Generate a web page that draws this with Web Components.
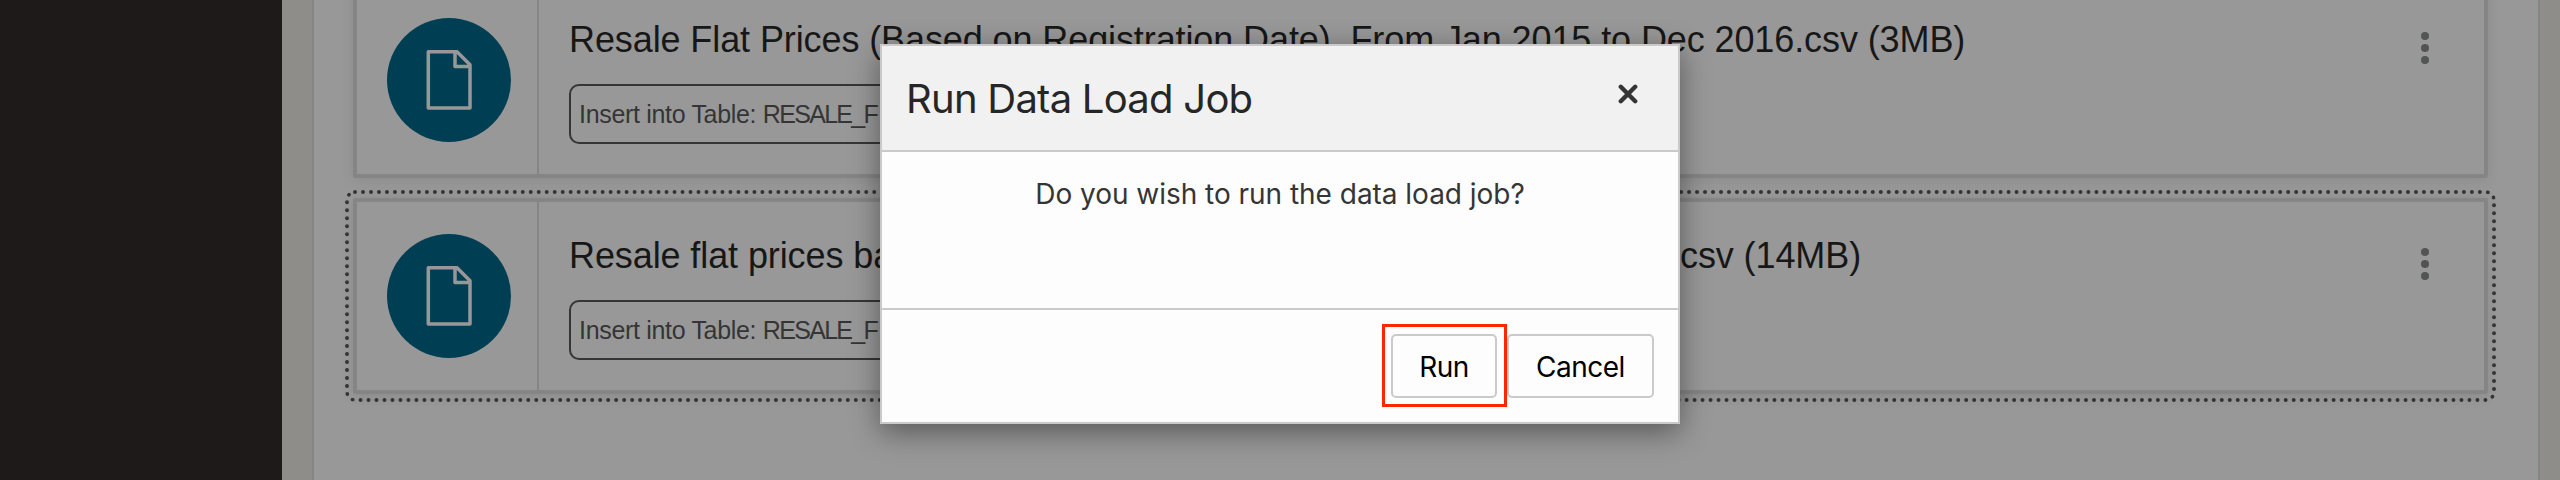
<!DOCTYPE html>
<html lang="en"><head><meta charset="utf-8"><title>Data Load</title>
<style>
html,body{margin:0;height:480px;overflow:hidden}
body{font-family:"Liberation Sans",Arial,sans-serif}
.wide{letter-spacing:.3px}
.tight{letter-spacing:-1.7px}
</style></head><body>
<load-app>
<load-card><span slot="title">Resale Flat Prices (Based on Registration Date), From Jan 2015 to Dec 2016.csv (3MB)</span><span slot="target">Insert into Table: <span class="tight">RESALE_F</span></span></load-card>
<load-card selected><span slot="title">Resale flat prices based<span class="wide"> on registration date from Jan-2017 onwards</span>.csv (14MB)</span><span slot="target">Insert into Table: <span class="tight">RESALE_F</span></span></load-card>
<confirm-dialog slot="dialog"><span slot="title">Run Data Load Job</span><span slot="message">Do you wish to run the data load job?</span>
<dialog-button slot="actions" marked style="width:106px">Run</dialog-button><dialog-button slot="actions" style="width:147px">Cancel</dialog-button></confirm-dialog>
</load-app>
<script>
const define=(name,html)=>customElements.define(name,class extends HTMLElement{
 constructor(){super();this.attachShadow({mode:"open"}).innerHTML=html}
});
define("file-icon",`<style>:host{display:flex;width:124px;height:124px;border-radius:50%;background:#003f53;align-items:center;justify-content:center}svg{display:block}</style>
<svg width="46" height="62" viewBox="0 -1 46 62" fill="none" stroke="#989898" stroke-width="3.5" stroke-linejoin="round"><path d="M2.3 1.7H31L44 14.8V58H2.3Z M29 1.7V16.5H44"/></svg>`);
define("more-menu",`<style>:host{display:flex;flex-direction:column;gap:4px}i{width:8px;height:8px;border-radius:50%;background:#535455}</style><i></i><i></i><i></i>`);
define("load-card",`<style>
:host{display:flex;box-sizing:border-box;height:196px;border:4px solid #858585;border-radius:2px;box-shadow:0 2px 14px rgba(0,0,0,.09);flex:none}
:host([selected]){outline:4px dotted #353535;outline-offset:4px}
.icon{border-right:2px solid #858585;display:flex;padding:32px 0 0 30px;width:150px;flex:none}
.main{flex:1;padding:32px 0 0 30px;min-width:0}
.title{font-size:36px;line-height:44px;white-space:nowrap;color:#171717;letter-spacing:-.1px}
.target{display:inline-flex;align-items:center;box-sizing:border-box;width:420px;height:60px;border:2px solid #353535;border-radius:10px;padding:0 8px;margin-top:22px;font-size:25px;color:#353535;letter-spacing:-.32px;white-space:nowrap}
more-menu{margin:46px 55.5px 0 0}
</style><div class="icon"><file-icon></file-icon></div><div class="main"><div class="title"><slot name="title"></slot></div><div class="target"><slot name="target"></slot></div></div><more-menu></more-menu>`);
define("dialog-button",`<style>
:host{display:flex;position:relative;box-sizing:border-box;height:64px;border:2px solid #cacaca;border-radius:5px;align-items:center;justify-content:center;font-size:28px;letter-spacing:-.5px;padding-top:2px;color:#000;background:#fdfdfd}
:host([marked])::after{content:"";position:absolute;inset:-12px -12px -11px -11.5px;border:3px solid #ff2600}
</style><slot></slot>`);
define("confirm-dialog",`<style>
:host{display:flex;flex-direction:column;box-sizing:border-box;width:800px;height:380px;border:2px solid #cacaca;background:#fdfdfd;box-shadow:0 8px 28px rgba(0,0,0,.42);font-family:Inter,sans-serif}
header{height:104px;background:#f1f1f1;border-bottom:2px solid #cacaca;display:flex;justify-content:space-between;padding:0 40px 0 24px}
h1{margin:0;font-size:40px;font-weight:400;line-height:106px;letter-spacing:-.75px;color:#262626}
svg{margin-top:38px}
.body{flex:1;text-align:center;font-size:28px;letter-spacing:-.03px;line-height:34px;padding-top:25px;color:#353535}
footer{height:114px;border-top:2px solid #cacaca;display:flex;justify-content:flex-end;align-items:flex-start;padding:24px 24px 0;box-sizing:border-box;gap:10px}
</style><header><h1><slot name="title"></slot></h1><svg width="20" height="20" viewBox="0 0 20 20" stroke="#353535" stroke-width="4.4" stroke-linecap="round"><path d="M2.8 2.8 17.2 17.2M17.2 2.8 2.8 17.2"/></svg></header><div class="body"><slot name="message"></slot></div><footer><slot name="actions"></slot></footer>`);
define("load-app",`<style>
:host{display:flex;height:480px;width:2560px;background:#8e8d8a;overflow:hidden;position:relative}
nav{width:282px;background:#1e1a19;flex:none}
main{margin-left:30px;width:2228px;box-sizing:border-box;border:solid #858585;border-width:0 2px;background:#989898;padding:0 50px 0 39px;flex:none}
.list{margin-top:-18px;display:flex;flex-direction:column;gap:20px}
.overlay{position:absolute;left:880px;top:44px}
</style><nav></nav><main><div class="list"><slot></slot></div></main><div class="overlay"><slot name="dialog"></slot></div>`);
</script></body></html>
